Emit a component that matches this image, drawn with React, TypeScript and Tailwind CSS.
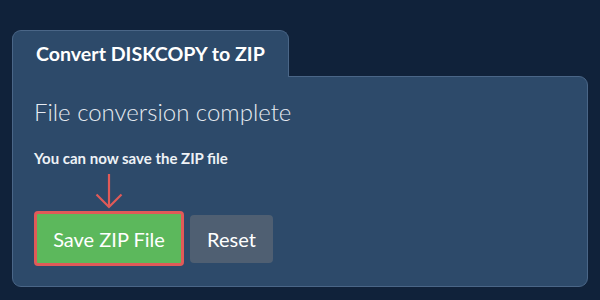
export default function App() {
  return (
    <div className="w-[600px] h-[300px] bg-[#10223a] pt-[30px] pl-[12px] font-['Lato',sans-serif] text-white overflow-hidden">
      {/* tab */}
      <div className="relative z-10 -mb-px flex h-[47px] w-[277px] items-center rounded-t-[9px] border border-b-0 border-[#4a6687] bg-[#2d4a6a] pl-[23px]">
        <span className="text-[19.6px] font-bold leading-none">Convert DISKCOPY to ZIP</span>
      </div>
      {/* panel */}
      <div className="h-[211px] w-[576px] rounded-b-[9px] rounded-tr-[9px] border border-[#4a6687] bg-[#2d4a6a] px-[21px] pt-[20px]">
        <h2 className="text-[24px] font-light leading-[30px] text-[#e6ebf1]">File conversion complete</h2>
        <p className="mt-[22px] text-[15px] font-bold leading-[18px] text-[#eef2f6]">You can now save the ZIP file</p>
        <div className="mt-[6px] flex w-[150px] justify-center">
          <svg width="28" height="36" viewBox="0 0 28 36" fill="none" stroke="#e05a58" strokeWidth="2.2">
            <path d="M14 1 V34" />
            <path d="M1.5 21.5 L14 34 L26.5 21.5" />
          </svg>
        </div>
        <div className="mt-[2px] flex items-center gap-[6px]">
          <button className="h-[55px] w-[150px] rounded-[4px] border-[3px] border-[#e05a58] bg-[#5cb85c] text-[20px] leading-none text-white">
            Save ZIP File
          </button>
          <button className="h-[48px] w-[83px] rounded-[4px] bg-[#4f5f72] text-[20px] leading-none text-white">
            Reset
          </button>
        </div>
      </div>
    </div>
  );
}
